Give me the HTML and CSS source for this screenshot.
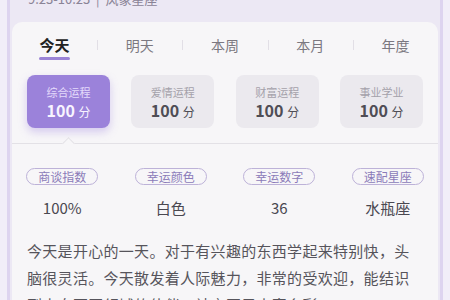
FILE: index.html
```html
<!DOCTYPE html>
<html lang="zh-CN">
<head>
  <meta charset="UTF-8">
  <meta name="viewport" content="width=device-width, initial-scale=1.0">
  <title>今日运势</title>
  <link rel="stylesheet" href="styles.css">
</head>
<body>
  <div class="frame">
    <div class="head">
      <div class="sign">9.23-10.23 &nbsp;|&nbsp; 风象星座</div>
    </div>

    <div class="card">
      <div class="tabs">
        <div class="tab active">今天</div>
        <div class="tab">明天</div>
        <div class="tab">本周</div>
        <div class="tab">本月</div>
        <div class="tab">年度</div>
      </div>

      <div class="scores">
        <div class="score selected">
          <div class="score-name">综合运程</div>
          <div class="score-value">100 <span>分</span></div>
        </div>
        <div class="score">
          <div class="score-name">爱情运程</div>
          <div class="score-value">100 <span>分</span></div>
        </div>
        <div class="score">
          <div class="score-name">财富运程</div>
          <div class="score-value">100 <span>分</span></div>
        </div>
        <div class="score">
          <div class="score-name">事业学业</div>
          <div class="score-value">100 <span>分</span></div>
        </div>
      </div>

      <div class="divider"></div>

      <div class="facts">
        <div class="fact">
          <div class="pill">商谈指数</div>
          <div class="fact-value">100%</div>
        </div>
        <div class="fact">
          <div class="pill">幸运颜色</div>
          <div class="fact-value">白色</div>
        </div>
        <div class="fact">
          <div class="pill">幸运数字</div>
          <div class="fact-value">36</div>
        </div>
        <div class="fact">
          <div class="pill">速配星座</div>
          <div class="fact-value">水瓶座</div>
        </div>
      </div>

      <p class="summary">今天是开心的一天。对于有兴趣的东西学起来特别快，头脑很灵活。今天散发着人际魅力，非常的受欢迎，能结识到来自不同领域的伙伴，社交圈子丰富多彩。</p>
    </div>
  </div>
</body>
</html>
```

FILE: styles.css
```css
body {
  margin: 0;
  padding: 0;
  background-color: #f1eef8;
  font-family: "Noto Sans CJK SC", "Noto Sans", sans-serif;
  overflow: hidden;
}

.frame {
  margin: 0 7px;
  padding: 0 2px;
  height: 300px;
  overflow: hidden;
  border-left: 3px solid #ddd4ef;
  border-right: 3px solid #ddd4ef;
  background-color: #ece8f4;
}

.head {
  height: 22px;
  overflow: hidden;
}

.sign {
  margin-top: -8px;
  padding-left: 16px;
  font-size: 13px;
  line-height: 14px;
  color: #8a8396;
}

.card {
  height: 278px;
  background-color: #f7f6f8;
  border-radius: 10px 10px 0 0;
}

.tabs {
  display: flex;
  padding-top: 13px;
}

.tab {
  flex: 1;
  position: relative;
  text-align: center;
  font-size: 14px;
  line-height: 20px;
  color: #7b7880;
}

.tab + .tab::before {
  content: "";
  position: absolute;
  left: 0;
  top: 5px;
  width: 1px;
  height: 10px;
  background-color: #e2dfe6;
}

.tab.active {
  font-size: 15px;
  font-weight: bold;
  color: #222;
}

.tab.active::after {
  content: "";
  display: block;
  width: 31px;
  height: 3px;
  margin: 2px auto 0;
  border-radius: 2px;
  background-color: #9a83d6;
}

.scores {
  display: grid;
  grid-template-columns: repeat(4, 83px);
  justify-content: space-between;
  padding: 0 15px;
  margin-top: 15px;
}

.score {
  height: 53px;
  box-sizing: border-box;
  padding-top: 9px;
  border-radius: 8px;
  background-color: #ebe9ee;
  text-align: center;
}

.score-name {
  font-size: 11px;
  line-height: 16px;
  color: #a4a1aa;
}

.score-value {
  font-size: 16px;
  font-weight: bold;
  line-height: 20px;
  color: #4f4d55;
}

.score-value span {
  font-size: 12px;
  font-weight: normal;
}

.score.selected {
  background-color: #9b82da;
  box-shadow: 0 4px 8px rgba(150, 120, 220, 0.35);
}

.score.selected .score-name {
  color: #e4dafa;
}

.score.selected .score-value {
  color: #f8f4ff;
}

.divider {
  position: relative;
  margin-top: 15px;
  border-top: 1px solid #e3e1e6;
}

.divider::after {
  content: "";
  position: absolute;
  left: 52px;
  top: -5px;
  width: 8px;
  height: 8px;
  background-color: #f7f6f8;
  border-top: 1px solid #e3e1e6;
  border-left: 1px solid #e3e1e6;
  transform: rotate(45deg);
}

.facts {
  display: grid;
  grid-template-columns: repeat(4, 1fr);
  margin: 24px -4px 0;
}

.fact {
  text-align: center;
}

.pill {
  width: 70px;
  margin: 0 auto;
  font-size: 12px;
  line-height: 15px;
  color: #8b7bb8;
  border: 1px solid #bdb2d8;
  border-radius: 9px;
}

.fact-value {
  margin-top: 13px;
  font-size: 15px;
  line-height: 20px;
  color: #4a4850;
}

.summary {
  margin: 19px 0 0;
  padding: 0 25px 0 15px;
  font-size: 15px;
  line-height: 27px;
  letter-spacing: 0.3px;
  color: #56545b;
}
```
